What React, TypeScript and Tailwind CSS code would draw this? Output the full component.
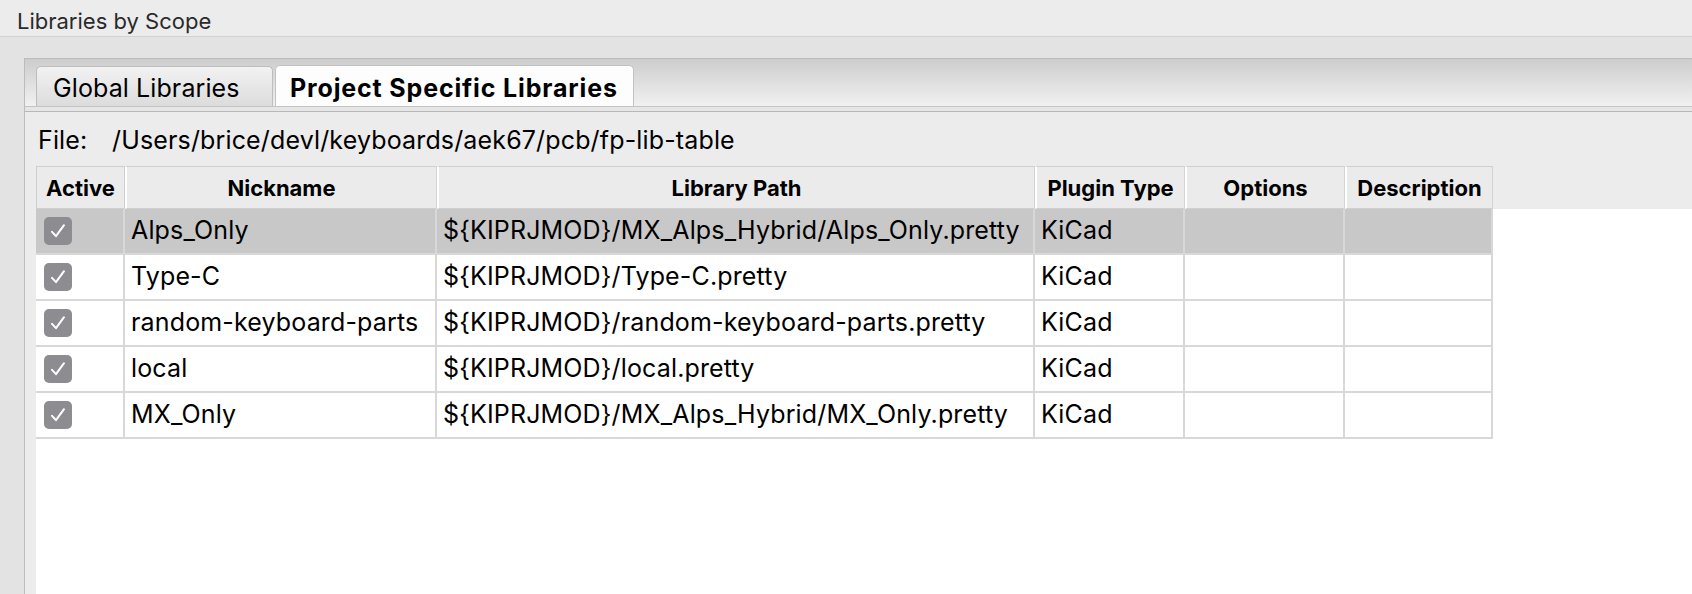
import React from "react";

const cols = [
  { label: "Active", w: "w-[89px]" },
  { label: "Nickname", w: "w-[312px]" },
  { label: "Library Path", w: "w-[598px]" },
  { label: "Plugin Type", w: "w-[150px]" },
  { label: "Options", w: "w-[160px]" },
  { label: "Description", w: "w-[148px]" },
];

const rows = [
  { nick: "Alps_Only", path: "${KIPRJMOD}/MX_Alps_Hybrid/Alps_Only.pretty" },
  { nick: "Type-C", path: "${KIPRJMOD}/Type-C.pretty" },
  { nick: "random-keyboard-parts", path: "${KIPRJMOD}/random-keyboard-parts.pretty" },
  { nick: "local", path: "${KIPRJMOD}/local.pretty" },
  { nick: "MX_Only", path: "${KIPRJMOD}/MX_Alps_Hybrid/MX_Only.pretty" },
];

function Check() {
  return (
    <div className="w-[28px] h-[28px] rounded-[5px] bg-[#8d8d91] flex items-center justify-center">
      <svg width="22" height="22" viewBox="0 0 22 22" fill="none">
        <path d="M5 11.8 L9 16.2 L17 5.2" stroke="white" strokeWidth="2" strokeLinecap="round" strokeLinejoin="round" />
      </svg>
    </div>
  );
}

export default function App() {
  const ui = { fontFamily: "Inter, 'Liberation Sans', sans-serif" };
  return (
    <div className="w-[1692px] h-[594px] flex flex-col bg-[#e3e3e3] overflow-hidden text-black" style={ui}>
      {/* title strip */}
      <div className="h-[37px] shrink-0 bg-[#ececec] border-b border-[#d2d2d2] flex items-center pl-[17px] pt-[6px]">
        <span className="text-[22px] text-[#2a2a2a]">Libraries by Scope</span>
      </div>

      <div className="flex-1 flex flex-col pt-[21px] pl-[24px]">
        <div className="flex-1 flex flex-col bg-[#ececec] border-l border-t border-[#bcbcbc]">
          {/* tab bar */}
          <div className="h-[48px] shrink-0 bg-gradient-to-b from-[#cdcdcd] to-[#f1f1f1] border-b border-[#c4c4c4] flex items-end pl-[11px] gap-[2px]">
            <div className="h-[40px] w-[237px] rounded-t-[5px] border border-b-0 border-[#bdbdbd] bg-gradient-to-b from-[#f2f2f2] to-[#dcdcdc] flex items-center pl-[16px] pt-[5px]">
              <span className="text-[25px] tracking-[0.1px]">Global Libraries</span>
            </div>
            <div className="h-[41px] w-[359px] rounded-t-[5px] border border-b-0 border-[#c2c2c2] bg-[#fdfdfd] flex items-center pl-[14px] pt-[5px]">
              <span className="text-[25px] font-bold tracking-[0.85px]">Project Specific Libraries</span>
            </div>
          </div>
          <div className="h-[5px] shrink-0 bg-[#e6e6e6] border-b border-[#b8b8b8]" />

          {/* file row */}
          <div className="h-[54px] shrink-0 flex items-center pl-[13px] pt-[4px] text-[25px] tracking-[0.15px]">
            <span className="w-[74px]">File:</span>
            <span>/Users/brice/devl/keyboards/aek67/pcb/fp-lib-table</span>
          </div>

          {/* grid */}
          <div className="flex-1 flex flex-col ml-[11px]">
            <div className="h-[43px] shrink-0 flex">
              {cols.map((c, i) => (
                <div
                  key={c.label}
                  className={`${c.w} h-full flex items-center justify-center pt-[2px] text-[22px] font-bold bg-[#ebebeb] border-t border-b border-[#cfcfcf] ${
                    i === 0 ? "border-l border-r border-[#bdbdbd]" : "border-l-2 border-l-white border-r border-r-[#d3d3d3]"
                  }`}
                >
                  {c.label}
                </div>
              ))}
            </div>
            <div className="flex-1 bg-white">
              {rows.map((r, i) => (
                <div key={r.nick} className={`h-[46px] w-fit flex text-[25px] tracking-[0.15px] ${i === 0 ? "bg-[#c8c8c8]" : ""}`}>
                  <div className="w-[89px] flex items-center pl-[8px] border-b-2 border-r-2 border-[#d8d8d8]">
                    <Check />
                  </div>
                  <div className="w-[312px] flex items-center pl-[6px] border-b-2 border-r-2 border-[#d8d8d8]">{r.nick}</div>
                  <div className="w-[598px] flex items-center pl-[6px] border-b-2 border-r-2 border-[#d8d8d8]">{r.path}</div>
                  <div className="w-[150px] flex items-center pl-[6px] border-b-2 border-r-2 border-[#d8d8d8]">KiCad</div>
                  <div className="w-[160px] border-b-2 border-r-2 border-[#d8d8d8]" />
                  <div className="w-[148px] border-b-2 border-r-2 border-[#d8d8d8]" />
                </div>
              ))}
            </div>
          </div>
        </div>
      </div>
    </div>
  );
}
